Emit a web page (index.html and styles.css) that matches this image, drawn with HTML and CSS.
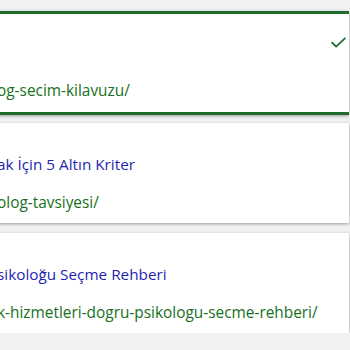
FILE: index.html
```html
<!DOCTYPE html>
<html lang="tr">
	<head>
		<meta charset="utf-8" />
		<link rel="stylesheet" href="styles.css">
	</head>
	<body>
		<div class="results">
			<div class="result selected">
				<span class="title"></span>
				<span class="url">og-secim-kilavuzu/</span>
				<svg class="check" viewBox="0 0 16 11">
					<path d="M1.2 5.6l4.3 4.2L14.8 1.2"/>
				</svg>
			</div>
			<div class="result">
				<span class="title">ak İçin 5 Altın Kriter</span>
				<span class="url">olog-tavsiyesi/</span>
			</div>
			<div class="result">
				<span class="title">sikoloğu Seçme Rehberi</span>
				<span class="url">k-hizmetleri-dogru-psikologu-secme-rehberi/</span>
			</div>
		</div>
	</body>
</html>
```

FILE: styles.css
```css
body {
	margin: 0;
	background-color: #f1f1f1;
	font-family: "Open Sans", Lato, sans-serif;
	overflow: hidden;
}

.results {
	display: flex;
	flex-direction: column;
	gap: 10px;
	padding-top: 11px;
	margin-left: -40px;
	margin-right: 1px;
}

.result {
	position: relative;
	display: flex;
	flex-direction: column;
	height: 100px;
	box-sizing: border-box;
	padding: 31px 0 0 37px;
	background-color: #fff;
	box-shadow: 0 1px 3px rgba(0, 0, 0, 0.35);
	overflow: hidden;
	white-space: nowrap;
}

.result.selected {
	height: 104px;
	margin-bottom: -2px;
	border-top: 3px solid #1e6b2c;
	border-bottom: 3px solid #1e6b2c;
	padding-top: 28px;
}

.title {
	display: block;
	height: 20px;
	line-height: 20px;
	font-size: 15.3px;
	color: #1f1fb0;
}

.url {
	display: block;
	margin-top: 19px;
	height: 20px;
	line-height: 20px;
	font-size: 15.4px;
	color: #177022;
}

.check {
	position: absolute;
	top: 23px;
	right: 3px;
	width: 15px;
	height: 11px;
	fill: none;
	stroke: #1e6b2c;
	stroke-width: 1.9;
	stroke-linecap: round;
	stroke-linejoin: round;
}
```
